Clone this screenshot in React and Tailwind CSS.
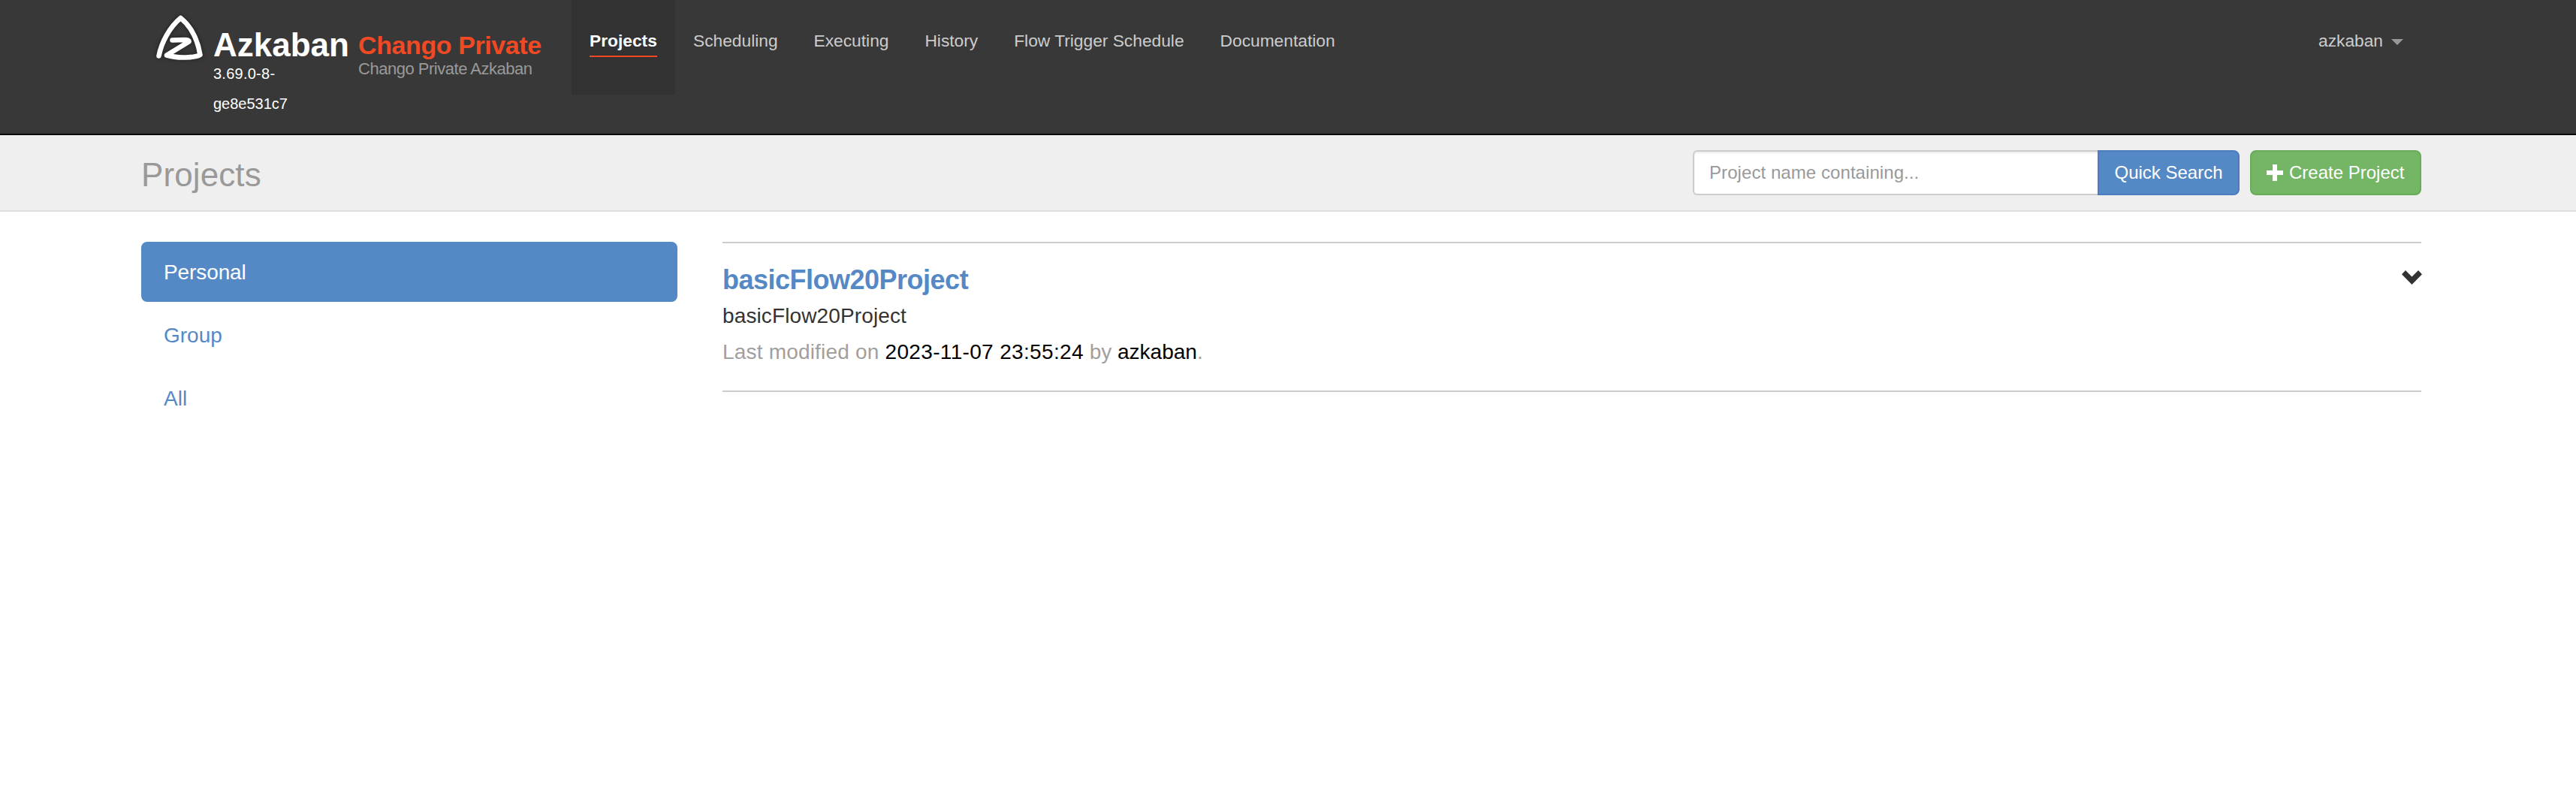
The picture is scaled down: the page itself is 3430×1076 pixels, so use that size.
import React from "react";

const NAV = ["Scheduling", "Executing", "History", "Flow Trigger Schedule", "Documentation"];

function Logo() {
  const d = "M11.5 64.5C15 46 26 26 40.5 14C54 25 63 42 66.5 63C60 67 36 68 22 63.5L51.5 45.5C52 44 50 43 46 43L29.5 43.5";
  return (
    <svg className="h-20 w-20 shrink-0" viewBox="0 0 80 80" fill="none" strokeLinecap="round" strokeLinejoin="round">
      <path d={d} stroke="#1c1c1c" strokeOpacity="0.6" strokeWidth="9" style={{ filter: "blur(2px)" }} />
      <path d={d} stroke="#fff" strokeWidth="6.6" style={{ filter: "blur(0.7px)" }} />
    </svg>
  );
}

function Header() {
  return (
    <header className="flex h-[180px] items-start border-b-2 border-[#0a0a0a] bg-[#383838] pr-[206px] pl-[200px]">
      <div className="pt-2.5"><Logo /></div>
      <div className="ml-1 w-[193px] pt-10 text-white">
        <div className="text-[44px] leading-10 font-bold">Azkaban</div>
        <div className="-mt-0.5 text-[20px] leading-10">
          <span className="tracking-[0.25px]">3.69.0-8-</span><br />ge8e531c7
        </div>
      </div>
      <div className="w-[284px] pt-11 whitespace-nowrap">
        <div className="text-[34px] leading-8 font-bold tracking-[-0.4px] text-[#f04923]">Chango Private</div>
        <div className="mt-0.5 text-[22px] leading-7 tracking-[-0.48px] text-[#999]">Chango Private Azkaban</div>
      </div>
      <nav className="flex text-[22.75px] leading-10 whitespace-nowrap text-[#ccc]">
        <div className="h-[126px] bg-[#323232] px-6 pt-[34px] font-bold text-white">
          <div className="border-b-2 border-[#f04923]">Projects</div>
        </div>
        {NAV.map((label) => (
          <a key={label} className="pt-[34px] pr-[23.8px] pl-[24.2px]">{label}</a>
        ))}
      </nav>
      <div className="ml-auto flex items-center pt-[34px] pr-6 text-[22.75px] leading-10 text-[#ccc]">
        azkaban
        <svg className="mt-1 ml-[11px] h-2 w-4" viewBox="0 0 16 8"><path d="M0 0H16L8 8Z" fill="#999" /></svg>
      </div>
    </header>
  );
}

export default function App() {
  return (
    <div className="min-h-[1076px] bg-white font-['Liberation_Sans',Arial,sans-serif] text-[#333]">
      <Header />
      <section className="flex h-[102px] items-center justify-between border-b-2 border-[#ddd] bg-[#efefef] pr-[206px] pl-[188px]">
        <h1 className="pt-[5px] text-[44px] leading-[48px] tracking-[0.1px] text-[#999]">Projects</h1>
        <div className="flex h-[60px] text-2xl leading-8">
          <input
            className="w-[539px] rounded-l-md border-2 border-r-0 border-[#ccc] bg-white px-5 tracking-[0.07px] shadow-[inset_0_2px_2px_rgba(0,0,0,0.075)] placeholder:text-[#999]"
            placeholder="Project name containing..."
          />
          <button className="w-[189px] rounded-r-lg border-2 border-[#4a7cbe] bg-[#5589c6] text-white">Quick Search</button>
          <button className="ml-3.5 flex w-[228px] items-center rounded-lg border-2 border-[#67ad58] bg-[#74b566] pl-5 text-white">
            <svg className="mr-2 h-[22px] w-[22px]" viewBox="0 0 22 22"><path d="M8 0H14V8H22V14H14V22H8V14H0V8H8Z" fill="#fff" /></svg>
            Create Project
          </button>
        </div>
      </section>
      <main className="flex gap-[60px] pt-10 pr-[206px] pl-[188px] text-[28px] leading-10">
        <aside className="flex w-[714px] flex-col gap-1 text-[#5589c6]">
          <a className="rounded-lg bg-[#5589c6] px-[30px] pt-[21px] pb-[19px] tracking-[-0.1px] text-white">Personal</a>
          <a className="px-[30px] pt-[21px] pb-[19px]">Group</a>
          <a className="px-[30px] pt-[21px] pb-[19px]">All</a>
        </aside>
        <div className="flex h-[200px] flex-1 items-start justify-between border-y-2 border-[#ccc]">
          <div className="pt-[29px]">
            <h2 className="text-[36px] leading-[40px] font-bold tracking-[-0.5px] text-[#5589c6]">basicFlow20Project</h2>
            <p className="mt-2 tracking-[0.12px]">basicFlow20Project</p>
            <p className="mt-2 text-[#a0a0a0]">
              <span className="tracking-[0.19px]">Last modified on </span>
              <strong className="font-normal tracking-[0.34px] text-black">2023-11-07 23:55:24</strong>
              {" by "}
              <strong className="font-normal text-black">azkaban</strong>.
            </p>
          </div>
          <svg className="mt-9 -mr-px h-[19px] w-[27px]" viewBox="0 0 27 19"><path d="M5 0L13.5 8.5L22 0L27 5.3L13.5 19L0 5.3Z" fill="#333" /></svg>
        </div>
      </main>
    </div>
  );
}
